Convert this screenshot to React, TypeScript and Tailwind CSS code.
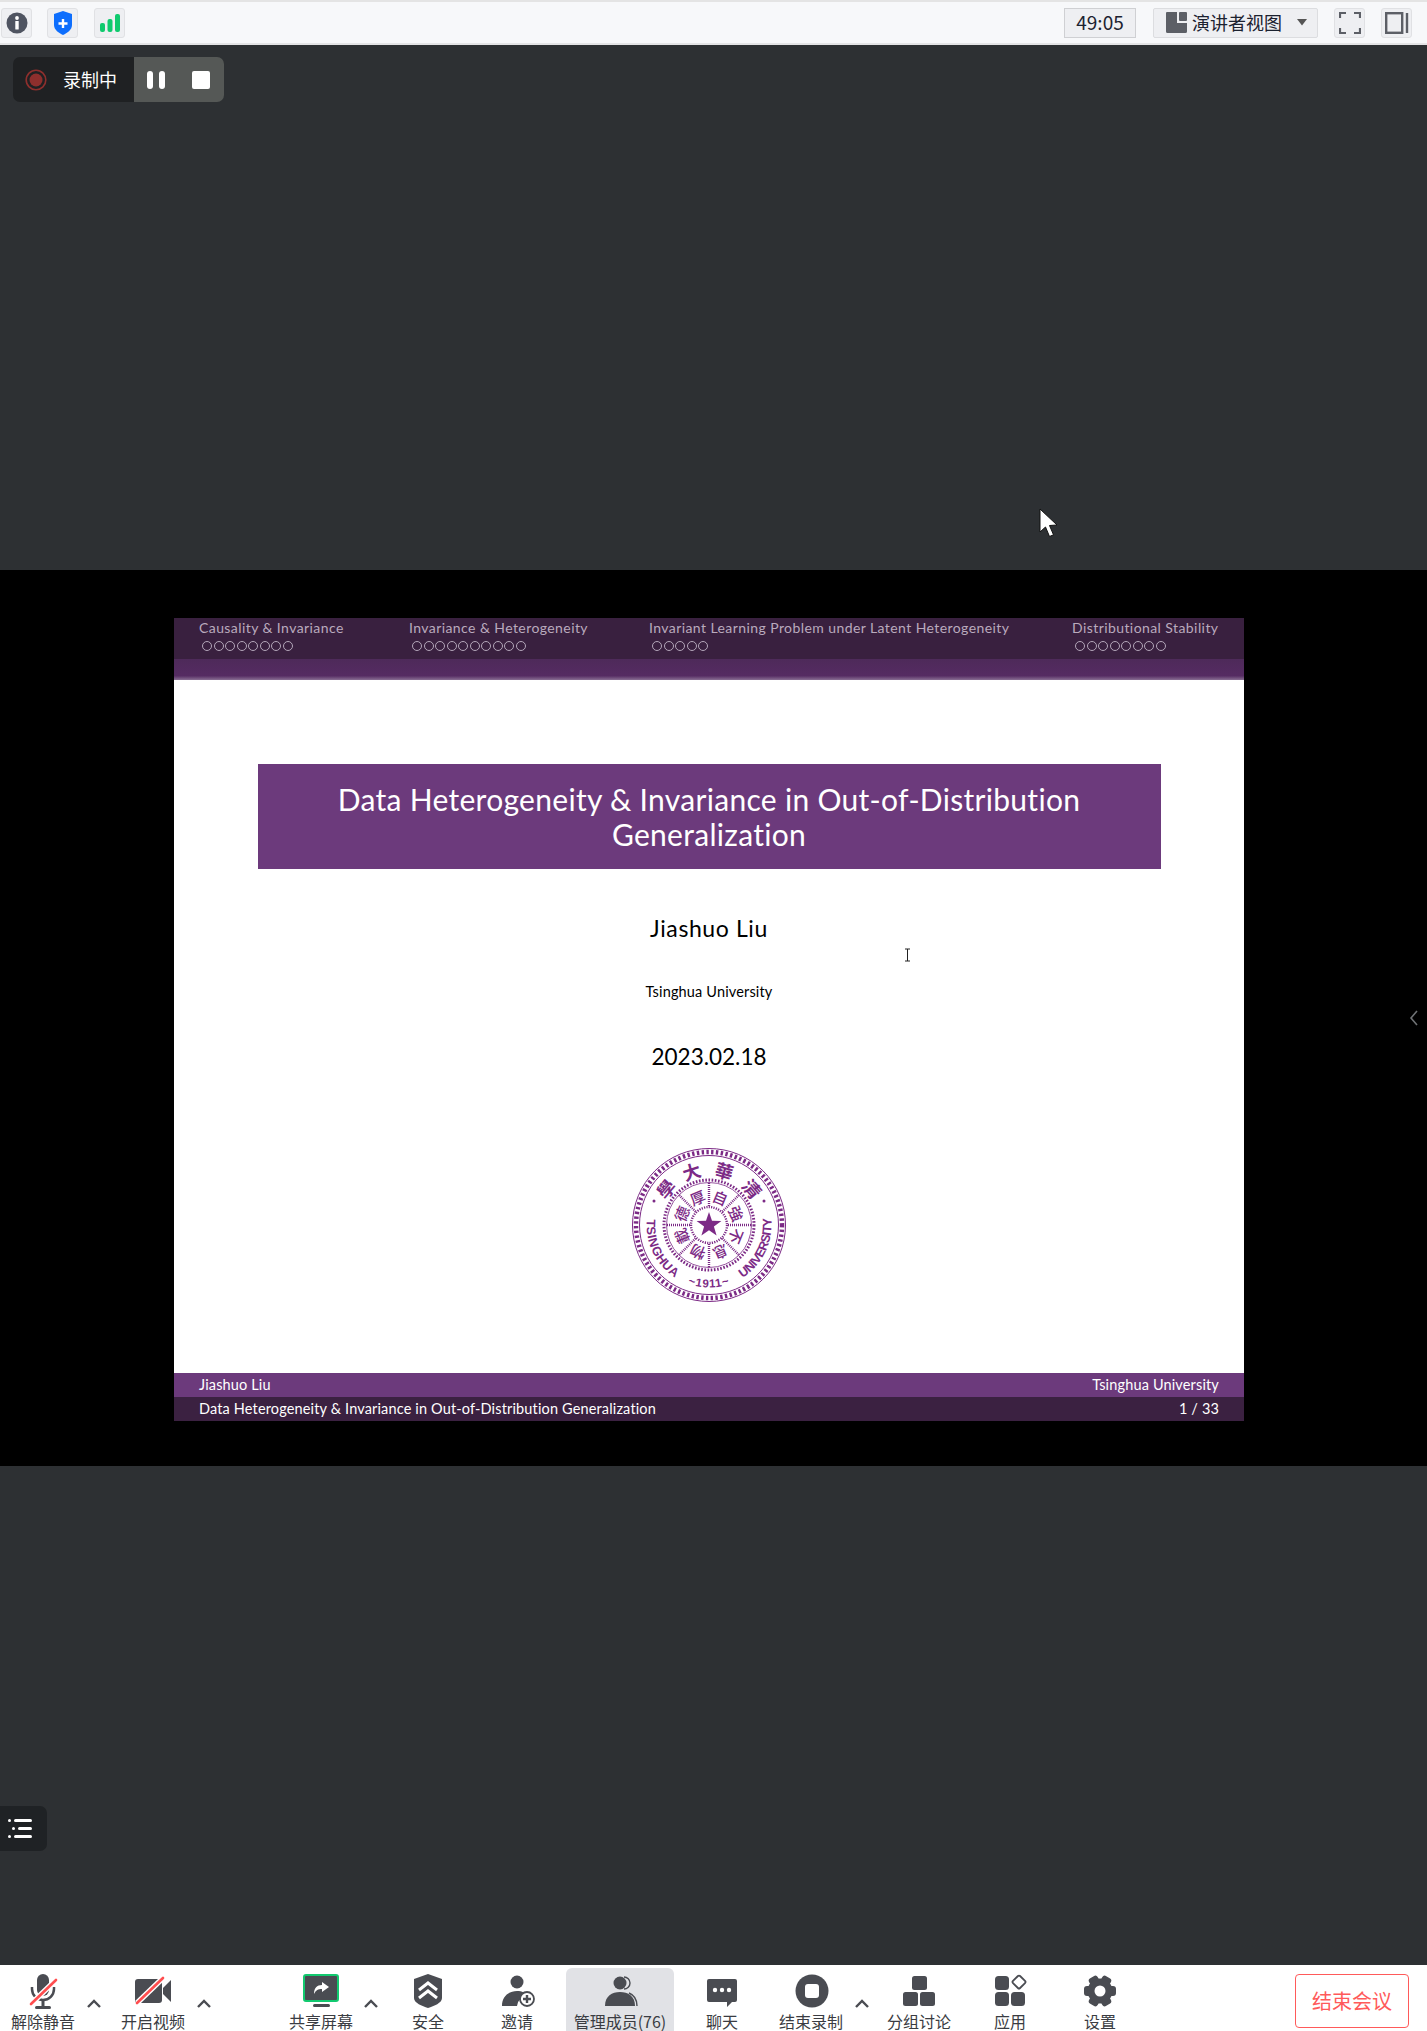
import { ReactNode } from 'react';

const ICON = '#4a4c52';
const cjk = "font-['Noto_Sans_CJK_SC','Liberation_Sans',sans-serif]";
const slideFont = "font-['Lato','Open_Sans',sans-serif]";

// open circles of the beamer mini navigation
const Dots = ({ count }: { count: number }) => (
  <div className="flex mt-[5px] ml-[3px] gap-[1.5px]">
    {Array.from({ length: count }).map((_, i) => (
      <span key={i} className="w-[10px] h-[10px] rounded-full border border-[#b3a6b9]" />
    ))}
  </div>
);

const TopButton = ({ children, className }: { children: ReactNode; className: string }) => (
  <div className={`h-[30px] w-[31px] flex items-center justify-center rounded-[3px] bg-[#eeeff2] border border-[#e0e1e4] ${className}`}>
    {children}
  </div>
);

const ToolItem = ({ label, icon, className }: { label: string; icon: ReactNode; className: string }) => (
  <div className={`flex flex-col items-center shrink-0 pt-[9px] ${className}`}>
    <div className="w-[36px] h-[36px]">{icon}</div>
    <div className="text-[16px] leading-[17px] mt-[3px] text-[#3a3c42] whitespace-nowrap">{label}</div>
  </div>
);

const Caret = ({ className }: { className: string }) => (
  <div className={`w-[20px] shrink-0 pt-[31px] ${className}`}>
    <svg width="20" height="14" viewBox="0 0 20 14" fill="none" stroke={ICON} strokeWidth="2.4">
      <path d="M4 11 L10 5 L16 11" />
    </svg>
  </div>
);

const MicIcon = () => (
  <svg width="36" height="36" viewBox="0 0 36 36">
    <rect x="12" y="0" width="12" height="22" rx="6" fill={ICON} />
    <path d="M7 13 V15 A11 11 0 0 0 29 15 V13" fill="none" stroke={ICON} strokeWidth="2.5" />
    <rect x="16.5" y="25" width="3" height="8" fill={ICON} />
    <rect x="10" y="32" width="16" height="3" rx="1.5" fill={ICON} />
    <path d="M31 6 L6 30" stroke="#fff" strokeWidth="5.5" />
    <path d="M31 6 L6 30" stroke="#ff4d4f" strokeWidth="2.6" strokeLinecap="round" />
  </svg>
);

const VideoIcon = () => (
  <svg width="36" height="36" viewBox="0 0 36 36">
    <rect x="0" y="5" width="27" height="24" rx="3" fill={ICON} />
    <path d="M28 14 L36 6 V28 L28 20 Z" fill={ICON} />
    <path d="M28 4 L2 29" stroke="#fff" strokeWidth="5.5" />
    <path d="M28 4 L2 29" stroke="#ff4d4f" strokeWidth="2.6" strokeLinecap="round" />
  </svg>
);

const ShareIcon = () => (
  <svg width="36" height="36" viewBox="0 0 36 36">
    <rect x="1" y="1" width="34" height="26" rx="2" fill={ICON} stroke="#12c96f" strokeWidth="2" />
    <path d="M19 8 L26 13 L19 18 V15 C15 15 13 16 11 20 C11 14 14 11 19 11 Z" fill="#fff" />
    <rect x="10" y="30" width="17" height="3" rx="1.5" fill={ICON} />
  </svg>
);

const ShieldIcon = () => (
  <svg width="36" height="36" viewBox="0 0 36 36">
    <path d="M18 0 L32 5 V24 C32 29 24 32 18 34 C12 32 4 29 4 24 V5 Z" fill={ICON} />
    <path d="M9 16 L18 9 L27 16 M9 24 L18 17 L27 24" fill="none" stroke="#fff" strokeWidth="3" />
  </svg>
);

const InviteIcon = () => (
  <svg width="36" height="36" viewBox="0 0 36 36">
    <circle cx="18" cy="8" r="6.5" fill={ICON} />
    <path d="M3 32 C3 22 10 17 18 17 C23 17 27 19 29 22 A11 11 0 0 0 18 32 Z" fill={ICON} />
    <circle cx="28" cy="25" r="7" fill="#fff" stroke={ICON} strokeWidth="1.8" />
    <path d="M24 25 H32 M28 21 V29" stroke={ICON} strokeWidth="2.4" />
  </svg>
);

const MembersIcon = () => (
  <svg width="36" height="36" viewBox="0 0 36 36">
    <path d="M22 3 A6 6 0 0 1 22 15" fill="none" stroke={ICON} strokeWidth="1.4" />
    <path d="M27 19 C32 21 35 26 35 32" fill="none" stroke={ICON} strokeWidth="1.4" />
    <circle cx="18" cy="9" r="6.5" fill={ICON} />
    <path d="M3 32 C3 22 10 18 18 18 C26 18 33 22 33 32 Z" fill={ICON} />
  </svg>
);

const ChatIcon = () => (
  <svg width="36" height="36" viewBox="0 0 36 36">
    <path d="M5 5 H31 Q33 5 33 7 V26 Q33 28 31 28 H28 L23 33 V28 H5 Q3 28 3 26 V7 Q3 5 5 5 Z" fill={ICON} />
    <circle cx="11" cy="16" r="2.2" fill="#fff" />
    <circle cx="18" cy="16" r="2.2" fill="#fff" />
    <circle cx="25" cy="16" r="2.2" fill="#fff" />
  </svg>
);

const StopIcon = () => (
  <svg width="36" height="36" viewBox="0 0 36 36">
    <circle cx="19" cy="17" r="16.5" fill={ICON} />
    <rect x="12" y="10" width="14" height="14" rx="3" fill="#fff" />
  </svg>
);

const BreakoutIcon = () => (
  <svg width="36" height="36" viewBox="0 0 36 36" fill={ICON}>
    <rect x="11" y="2" width="15" height="14" rx="2.5" />
    <rect x="2" y="18" width="15" height="14" rx="2.5" />
    <rect x="19" y="18" width="15" height="14" rx="2.5" />
  </svg>
);

const AppsIcon = () => (
  <svg width="36" height="36" viewBox="0 0 36 36" fill={ICON}>
    <rect x="3" y="2" width="14" height="14" rx="3.5" />
    <rect x="3" y="18" width="14" height="14" rx="3.5" />
    <rect x="19" y="18" width="14" height="14" rx="3.5" />
    <rect x="22" y="3" width="10" height="10" rx="1.5" fill="none" stroke={ICON} strokeWidth="1.8" transform="rotate(45 27 8)" />
  </svg>
);

const GearIcon = () => {
  const teeth = [0, 60, 120, 180, 240, 300];
  return (
    <svg width="36" height="36" viewBox="0 0 36 36">
      {teeth.map((a) => (
        <rect key={a} x="13" y="1" width="10" height="8" rx="3" fill={ICON} transform={`rotate(${a + 30} 18 17)`} />
      ))}
      <circle cx="18" cy="17" r="12.5" fill={ICON} />
      <circle cx="18" cy="17" r="5.5" fill="#fff" />
    </svg>
  );
};

// Tsinghua seal, characters stay real text
const Seal = () => {
  const c = '#7c2a86';
  const outer = [
    { t: '學', a: -50 },
    { t: '大', a: -18 },
    { t: '華', a: 16 },
    { t: '清', a: 50 },
  ];
  const inner = ['自', '強', '不', '息', '物', '載', '德', '厚'];
  const spokes = [0, 45, 90, 135, 180, 225, 270, 315];
  const latin = "'Liberation Sans', sans-serif";
  return (
    <svg width="156" height="156" viewBox="-78 -78 156 156">
      <circle r="76.5" fill="none" stroke={c} strokeWidth="1" />
      <circle r="73" fill="none" stroke={c} strokeWidth="4.5" strokeDasharray="2.4 2.4" />
      <circle r="69.5" fill="none" stroke={c} strokeWidth="1" />
      <defs>
        <path id="sealRing" d="M 0 -62.5 A 62.5 62.5 0 0 0 0 62.5 A 62.5 62.5 0 0 0 0 -62.5" />
      </defs>
      {outer.map((o) => (
        <text
          key={o.t}
          x="0"
          y="-49"
          textAnchor="middle"
          fontSize="18"
          fontWeight="700"
          fill={c}
          fontFamily="'Noto Sans CJK TC', sans-serif"
          transform={`rotate(${o.a})`}
        >
          {o.t}
        </text>
      ))}
      <circle cx="-55" cy="-24" r="1.5" fill={c} />
      <circle cx="55" cy="-24" r="1.5" fill={c} />
      <text fontSize="12.5" fontWeight="700" fill={c} fontFamily={latin}>
        <textPath href="#sealRing" startOffset="23.5%" textLength="68">TSINGHUA</textPath>
      </text>
      <text fontSize="11.5" fontWeight="700" fill={c} fontFamily={latin} letterSpacing="0.8" textAnchor="middle">
        <textPath href="#sealRing" startOffset="50%">~1911~</textPath>
      </text>
      <text fontSize="12.5" fontWeight="700" fill={c} fontFamily={latin}>
        <textPath href="#sealRing" startOffset="59%" textLength="70">UNIVERSITY</textPath>
      </text>
      <circle r="45" fill="none" stroke={c} strokeWidth="3" strokeDasharray="1.6 1.6" />
      <circle r="42.5" fill="none" stroke={c} strokeWidth="0.8" />
      <circle r="18" fill="none" stroke={c} strokeWidth="2.4" strokeDasharray="1.2 1.2" />
      {spokes.map((a) => (
        <path key={a} d="M 0 -19 V -43" stroke={c} strokeWidth="2.4" strokeDasharray="1 1" transform={`rotate(${a})`} />
      ))}
      {inner.map((t, i) => (
        <text
          key={t}
          x="0"
          y="-23.5"
          textAnchor="middle"
          fontSize="15"
          fontWeight="500"
          fill={c}
          fontFamily="'Noto Sans CJK TC', sans-serif"
          transform={`rotate(${22.5 + i * 45})`}
        >
          {t}
        </text>
      ))}
      <path d="M0 -13 L3 -4.2 L12.4 -4 L4.9 1.6 L7.6 10.5 L0 5.2 L-7.6 10.5 L-4.9 1.6 L-12.4 -4 L-3 -4.2 Z" fill={c} />
    </svg>
  );
};

const sections = [
  { title: 'Causality & Invariance', dots: 8, w: 'w-[210px]' },
  { title: 'Invariance & Heterogeneity', dots: 10, w: 'w-[240px]' },
  { title: 'Invariant Learning Problem under Latent Heterogeneity', dots: 5, w: 'w-[423px]' },
  { title: 'Distributional Stability', dots: 8, w: 'w-[150px]' },
];

const Slide = () => (
  <div className={`w-[1070px] h-[803px] flex flex-col bg-white ${slideFont}`}>
    <div className="h-[41px] bg-[#39203f] flex pl-[25px] pt-[2px] shrink-0">
      {sections.map((s) => (
        <div key={s.title} className={`${s.w} shrink-0`}>
          <div className="text-[14px] leading-[16px] tracking-[0.42px] text-[#b9aabd] whitespace-nowrap">{s.title}</div>
          <Dots count={s.dots} />
        </div>
      ))}
    </div>
    <div className="h-[21px] shrink-0 bg-gradient-to-b from-[#4e2a5a] via-[#552b62] via-80% to-[#8a6f94]" />
    <div className="flex-1 flex flex-col items-center">
      <div className="mt-[84px] w-[903px] h-[105px] bg-[#6c3a7c] text-white text-[30px] leading-[35px] tracking-[0.3px] flex items-center justify-center text-center px-[60px]">
        Data Heterogeneity &amp; Invariance in Out-of-Distribution Generalization
      </div>
      <div className="mt-[44px] text-[23px] leading-[30px] tracking-[0.6px] text-black">Jiashuo Liu</div>
      <div className="mt-[40px] text-[14.5px] leading-[18px] tracking-[0.15px] text-black">Tsinghua University</div>
      <div className="mt-[43px] text-[22.5px] leading-[26px] text-black">2023.02.18</div>
      <div className="mt-[77px]">
        <Seal />
      </div>
    </div>
    <div className="h-[24px] shrink-0 bg-[#6c3a7c] text-white text-[14.5px] leading-[23px] tracking-[0.15px] flex justify-between px-[25px]">
      <span>Jiashuo Liu</span>
      <span>Tsinghua University</span>
    </div>
    <div className="h-[24px] shrink-0 bg-[#3b2141] text-white text-[14.5px] leading-[23px] tracking-[0.15px] flex justify-between px-[25px]">
      <span>Data Heterogeneity &amp; Invariance in Out-of-Distribution Generalization</span>
      <span>1 / 33</span>
    </div>
  </div>
);

const App = () => {
  return (
    <div className={`relative w-[1427px] h-[2031px] flex flex-col overflow-hidden bg-[#2d3033] ${cjk}`}>
      {/* top bar */}
      <div className="h-[45px] shrink-0 bg-[#f7f8fa] border-t-2 border-t-[#e4e4e4] border-b-2 border-b-[#e4e4e6] flex items-center pl-[1px] pr-[15px]">
        <TopButton className="">
          <svg width="22" height="22" viewBox="0 0 22 22">
            <circle cx="11" cy="11" r="10.5" fill="#4f5461" />
            <circle cx="11" cy="6" r="1.9" fill="#fff" />
            <rect x="9.3" y="9" width="3.4" height="8.5" rx="0.6" fill="#fff" />
          </svg>
        </TopButton>
        <TopButton className="ml-[15px]">
          <svg width="20" height="24" viewBox="0 0 20 24">
            <path d="M10 0 L19 3 V14 C19 19 14 22 10 24 C6 22 1 19 1 14 V3 Z" fill="#0d6efd" />
            <path d="M10 8 V17 M5.5 12.5 H14.5" stroke="#fff" strokeWidth="2.4" />
          </svg>
        </TopButton>
        <TopButton className="ml-[16px]">
          <svg width="20" height="18" viewBox="0 0 20 18" fill="#0fca6e">
            <rect x="0" y="9" width="5" height="9" rx="2" />
            <rect x="7.5" y="5" width="5" height="13" rx="2" />
            <rect x="15" y="0" width="5" height="18" rx="2" />
          </svg>
        </TopButton>
        <div className="ml-auto h-[30px] w-[72px] bg-[#eeeff2] border border-[#cfd0d3] flex items-center justify-center text-[19px] text-[#1c2230]">
          49:05
        </div>
        <div className="ml-[17px] h-[30px] w-[165px] bg-[#eeeff2] border border-[#dcdde0] rounded-[2px] flex items-center pl-[12px] text-[18px] text-[#1c2230]">
          <svg width="21" height="21" viewBox="0 0 21 21" fill="#5c5f66">
            <path d="M1 0 H11 V11 H21 V19.5 Q21 21 19.5 21 H1.5 Q0 21 0 19.5 V1 Q0 0 1 0 Z" />
            <rect x="13" y="0" width="8" height="9" rx="1" />
          </svg>
          <span className="ml-[5px] whitespace-nowrap">演讲者视图</span>
          <svg className="ml-[15px]" width="10" height="7" viewBox="0 0 10 7" fill="#555">
            <path d="M0 0 H10 L5 6.5 Z" />
          </svg>
        </div>
        <TopButton className="ml-[16px]">
          <svg width="22" height="22" viewBox="0 0 22 22" fill="none" stroke="#5c5f66" strokeWidth="2.2">
            <path d="M1 6 V1 H7 M15 1 H21 V6 M21 16 V21 H15 M7 21 H1 V16" />
          </svg>
        </TopButton>
        <TopButton className="ml-[16px]">
          <svg width="24" height="22" viewBox="0 0 24 22" fill="none" stroke="#5c5f66" strokeWidth="2.4">
            <rect x="1.2" y="1.2" width="16" height="19.6" />
            <path d="M22 1 V21" />
          </svg>
        </TopButton>
      </div>

      {/* upper empty area */}
      <div className="h-[525px] shrink-0 relative">
        <div className="absolute left-[13px] top-[12px] h-[45px] w-[211px] rounded-[7px] overflow-hidden flex">
          <div className="w-[121px] bg-[#1f2123] flex items-center pl-[12px]">
            <svg width="22" height="22" viewBox="0 0 22 22">
              <circle cx="11" cy="11" r="9.8" fill="none" stroke="#8e2f2d" strokeWidth="1.6" />
              <circle cx="11" cy="11" r="6.5" fill="#8e2f2d" />
            </svg>
            <span className="ml-[16px] text-[18px] text-white whitespace-nowrap">录制中</span>
          </div>
          <div className="flex-1 bg-[#555856] flex items-center">
            <div className="ml-[13px] flex gap-[6px]">
              <span className="w-[6px] h-[18px] rounded-[3px] bg-white" />
              <span className="w-[6px] h-[18px] rounded-[3px] bg-white" />
            </div>
            <span className="ml-[27px] w-[18px] h-[18px] rounded-[2px] bg-white" />
          </div>
        </div>
        <svg className="absolute left-[1038px] top-[463px]" width="22" height="30" viewBox="0 0 22 30">
          <path d="M2 1 V24 L7.5 19 L11.5 28.5 L15.5 26.8 L11.5 17.5 L19 17 Z" fill="#fff" stroke="#111" strokeWidth="1" />
        </svg>
      </div>

      {/* shared slide */}
      <div className="h-[896px] shrink-0 bg-black flex justify-center pt-[48px] pr-[9px] relative">
        <Slide />
        <svg className="absolute left-[1409px] top-[438px]" width="10" height="20" viewBox="0 0 10 20" fill="none" stroke="#6f7275" strokeWidth="1.6">
          <path d="M8 3 L2 10 L8 17" />
        </svg>
        <svg className="absolute left-[904px] top-[378px]" width="7" height="14" viewBox="0 0 7 14" fill="none" stroke="#222" strokeWidth="1">
          <path d="M1 1 H6 M3.5 1 V13 M1 13 H6" />
        </svg>
      </div>

      {/* lower empty area */}
      <div className="flex-1 relative">
        <div className="absolute left-0 top-[340px] w-[47px] h-[45px] bg-[#1f2225] rounded-r-[7px] flex flex-col justify-center gap-[5px] pl-[8px]">
          <div className="flex items-center">
            <span className="w-[3px] h-[3px] bg-white rounded-full" />
            <span className="ml-[3px] w-[18px] h-[3px] bg-white rounded-full" />
          </div>
          <div className="flex items-center pl-[4px]">
            <span className="w-[3px] h-[3px] bg-white rounded-full" />
            <span className="ml-[3px] w-[14px] h-[3px] bg-white rounded-full" />
          </div>
          <div className="flex items-center">
            <span className="w-[3px] h-[3px] bg-white rounded-full" />
            <span className="ml-[3px] w-[18px] h-[3px] bg-white rounded-full" />
          </div>
        </div>
      </div>

      {/* toolbar */}
      <div className="h-[66px] shrink-0 bg-white flex overflow-hidden">
        <ToolItem label="解除静音" icon={<MicIcon />} className="ml-[11px] w-[64px]" />
        <Caret className="ml-[9px]" />
        <ToolItem label="开启视频" icon={<VideoIcon />} className="ml-[17px] w-[64px]" />
        <Caret className="ml-[9px]" />
        <ToolItem label="共享屏幕" icon={<ShareIcon />} className="ml-[75px] w-[64px]" />
        <Caret className="ml-[8px]" />
        <ToolItem label="安全" icon={<ShieldIcon />} className="ml-[31px] w-[32px]" />
        <ToolItem label="邀请" icon={<InviteIcon />} className="ml-[57px] w-[32px]" />
        <div className="ml-[33px] w-[108px] mt-[3px] rounded-t-[6px] bg-[#e1e2e6] flex flex-col items-center pt-[6px]">
          <div className="w-[36px] h-[36px]">
            <MembersIcon />
          </div>
          <div className="text-[16px] leading-[17px] mt-[3px] text-[#3a3c42] whitespace-nowrap">管理成员(76)</div>
        </div>
        <ToolItem label="聊天" icon={<ChatIcon />} className="ml-[32px] w-[32px]" />
        <ToolItem label="结束录制" icon={<StopIcon />} className="ml-[41px] w-[64px]" />
        <Caret className="ml-[9px]" />
        <ToolItem label="分组讨论" icon={<BreakoutIcon />} className="ml-[15px] w-[64px]" />
        <ToolItem label="应用" icon={<AppsIcon />} className="ml-[43px] w-[32px]" />
        <ToolItem label="设置" icon={<GearIcon />} className="ml-[58px] w-[32px]" />
        <div className="ml-auto mr-[18px] mt-[9px] w-[114px] h-[54px] rounded-[4px] border border-[#ff5a5a] flex items-center justify-center text-[20px] text-[#ff5a5a]">
          结束会议
        </div>
      </div>
    </div>
  );
};

export default App;
